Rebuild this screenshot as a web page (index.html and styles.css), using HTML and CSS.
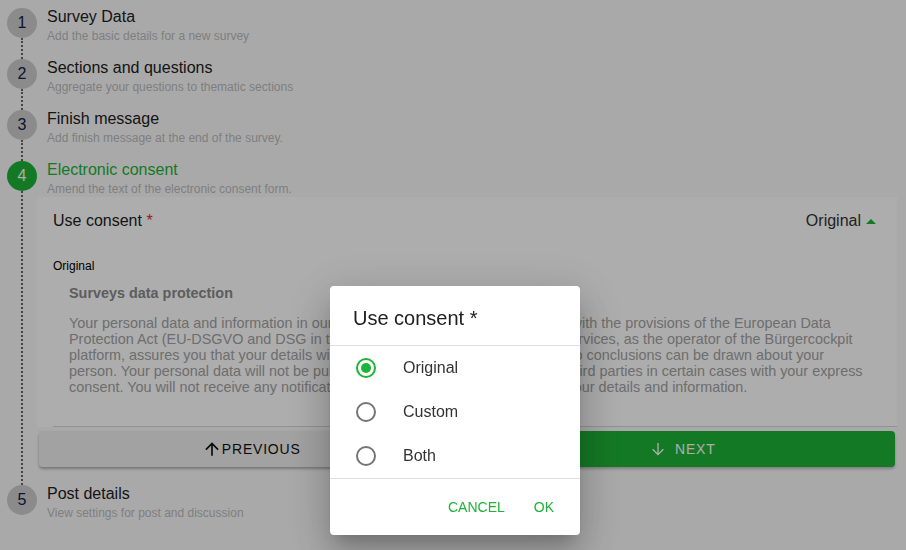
FILE: index.html
```html
<!DOCTYPE html>
<html lang="en">
  <head>
    <meta charset="UTF-8" />
    <title>New survey</title>
    <meta name="viewport" content="width=device-width, initial-scale=1.0" />
    <link rel="stylesheet" href="styles.css">
  </head>
  <body>
    <div class="stepper">
      <div class="step">
        <div class="step-rail"><span class="step-num">1</span><span class="rail-line"></span></div>
        <div class="step-main">
          <div class="step-title">Survey Data</div>
          <div class="step-sub">Add the basic details for a new survey</div>
        </div>
      </div>

      <div class="step">
        <div class="step-rail"><span class="step-num">2</span><span class="rail-line"></span></div>
        <div class="step-main">
          <div class="step-title">Sections and questions</div>
          <div class="step-sub">Aggregate your questions to thematic sections</div>
        </div>
      </div>

      <div class="step">
        <div class="step-rail"><span class="step-num">3</span><span class="rail-line"></span></div>
        <div class="step-main">
          <div class="step-title">Finish message</div>
          <div class="step-sub">Add finish message at the end of the survey.</div>
        </div>
      </div>

      <div class="step step-active">
        <div class="step-rail"><span class="step-num">4</span><span class="rail-line"></span></div>
        <div class="step-main">
          <div class="step-title">Electronic consent</div>
          <div class="step-sub">Amend the text of the electronic consent form.</div>

          <div class="consent-card">
            <div class="consent-inner">
              <div class="consent-head">
                <span>Use consent <span class="req">*</span></span>
                <span class="consent-select">Original <span class="caret"></span></span>
              </div>
              <div class="consent-kind">Original</div>
              <div class="consent-text">
                <h3>Surveys data protection</h3>
                <p>
                  <span>Your personal data and information in our surveys will be stored in accordance with the provisions of the European Data</span>
                  <span>Protection Act (EU-DSGVO and DSG in the valid version). The Bürgercockpit services, as the operator of the Bürgercockpit</span>
                  <span>platform, assures you that your details will be processed anonymously so that no conclusions can be drawn about your</span>
                  <span>person. Your personal data will not be published and will only be passed on to third parties in certain cases with your express</span>
                  <span>consent. You will not receive any notifications or an advertising after providing your details and information.</span>
                </p>
              </div>
            </div>
          </div>

          <div class="step-actions">
            <button class="btn btn-prev">
              <svg width="20" height="20" viewBox="0 0 24 24"><path d="M4 12l1.41 1.41L11 7.830V20h2V7.83l5.58 5.59L20 12l-8-8-8 8z" fill="#111"/></svg>PREVIOUS
            </button>
            <button class="btn btn-next">
              <svg width="16" height="16" viewBox="0 0 24 24"><path d="M12 3v17M4 12.5l8 8 8-8" fill="none" stroke="#fff" stroke-width="2"/></svg>NEXT
            </button>
          </div>
        </div>
      </div>

      <div class="step">
        <div class="step-rail"><span class="step-num">5</span></div>
        <div class="step-main">
          <div class="step-title">Post details</div>
          <div class="step-sub">View settings for post and discussion</div>
        </div>
      </div>
    </div>

    <div class="backdrop"></div>

    <div class="dialog">
      <div class="dialog-title">Use consent *</div>
      <div class="dialog-options">
        <label class="option"><span class="radio checked"></span>Original</label>
        <label class="option"><span class="radio"></span>Custom</label>
        <label class="option"><span class="radio"></span>Both</label>
      </div>
      <div class="dialog-actions">
        <span class="dialog-btn">Cancel</span>
        <span class="dialog-btn">Ok</span>
      </div>
    </div>
  </body>
</html>
```

FILE: styles.css
```css
body {
  margin: 0;
  background-color: #fafafa;
  font-family: "Liberation Sans", Arial, sans-serif;
  color: #212121;
}

.stepper {
  padding: 8px 9px 0 7px;
}

.step {
  display: flex;
}

.step-rail {
  width: 30px;
  flex-shrink: 0;
  display: flex;
  flex-direction: column;
  align-items: center;
}

.step-num {
  width: 30px;
  height: 30px;
  border-radius: 50%;
  background-color: #cdcdcd;
  color: #10204a;
  font-size: 16px;
  display: flex;
  align-items: center;
  justify-content: center;
}

.rail-line {
  flex: 1;
  border-left: 2px dotted #666;
}

.step-main {
  flex: 1;
  padding-bottom: 16px;
}

.step-title {
  padding-left: 10px;
  font-size: 16px;
  line-height: 18px;
}

.step-sub {
  padding-left: 10px;
  margin-top: 3px;
  font-size: 12px;
  line-height: 14px;
  color: #bbbbbb;
}

.step-active .step-num {
  background-color: #1db336;
  color: #fff;
}

.step-active .step-title {
  color: #1db336;
}

.step-active .step-main {
  padding-bottom: 18px;
}

/* consent card */

.consent-card {
  margin-top: 1px;
  background-color: #fff;
  padding-left: 16px;
}

.consent-inner {
  border-bottom: 1px solid #d6d6d6;
  padding: 15px 21px 31px 0;
}

.consent-head {
  display: flex;
  justify-content: space-between;
  font-size: 16px;
  line-height: 18px;
}

.req {
  color: #d32f2f;
}

.consent-select {
  color: #333;
  display: flex;
  align-items: center;
}

.caret {
  width: 0;
  height: 0;
  margin-left: 5px;
  border-left: 5px solid transparent;
  border-right: 5px solid transparent;
  border-bottom: 5px solid #1db336;
}

.consent-kind {
  margin-top: 29px;
  font-size: 12px;
  line-height: 14px;
  color: #000;
}

.consent-text {
  padding-left: 16px;
}

.consent-text h3 {
  margin: 12px 0 0;
  font-size: 14.4px;
  line-height: 16px;
  color: #8a8a8a;
}

.consent-text p {
  margin: 14px 0 0;
  font-size: 14.4px;
  line-height: 16px;
  color: #a2a2a2;
}

.consent-text p span {
  display: block;
  white-space: nowrap;
}

/* buttons */

.step-actions {
  display: flex;
  gap: 7px;
  margin: 4px 2px 0;
}

.btn {
  flex: 1;
  height: 36px;
  border: none;
  border-radius: 4px;
  font-family: inherit;
  font-size: 14px;
  letter-spacing: 0.8px;
  display: flex;
  align-items: center;
  justify-content: center;
}

.btn-prev {
  background-color: #efefef;
  color: #111;
  box-shadow: 0 2px 3px rgba(0, 0, 0, 0.3);
}

.btn-next {
  background-color: #1db336;
  color: #fff;
  box-shadow: 0 2px 3px rgba(0, 0, 0, 0.25);
  gap: 9px;
}

/* dialog */

.backdrop {
  position: fixed;
  inset: 0;
  background-color: rgba(0, 0, 0, 0.32);
}

.dialog {
  position: fixed;
  left: 330px;
  top: 286px;
  width: 250px;
  background-color: #fff;
  border-radius: 4px;
  box-shadow: 0 11px 15px -7px rgba(0, 0, 0, 0.2),
    0 24px 38px 3px rgba(0, 0, 0, 0.14), 0 9px 46px 8px rgba(0, 0, 0, 0.12);
}

.dialog-title {
  padding: 20px 24px 15px 23px;
  font-size: 20px;
  line-height: 24px;
  color: #212121;
  border-bottom: 1px solid #e0e0e0;
}

.dialog-options {
  border-bottom: 1px solid #e0e0e0;
}

.option {
  display: flex;
  align-items: center;
  height: 44px;
  padding-left: 26px;
  font-size: 16px;
  color: #333;
}

.radio {
  width: 20px;
  height: 20px;
  box-sizing: border-box;
  border: 2px solid #757575;
  border-radius: 50%;
  margin-right: 27px;
  display: flex;
  align-items: center;
  justify-content: center;
}

.radio.checked {
  border-color: #1db336;
}

.radio.checked::after {
  content: "";
  width: 10px;
  height: 10px;
  border-radius: 50%;
  background-color: #1db336;
}

.dialog-actions {
  height: 56px;
  display: flex;
  align-items: center;
  justify-content: flex-end;
  gap: 29px;
  padding-right: 26px;
}

.dialog-btn {
  font-size: 14px;
  text-transform: uppercase;
  color: #1db336;
}
```
